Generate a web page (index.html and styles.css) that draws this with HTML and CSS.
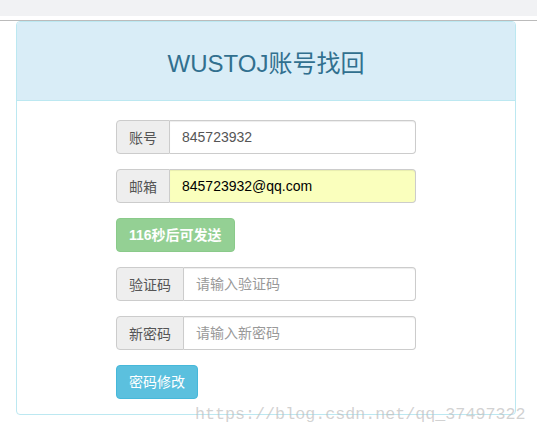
FILE: index.html
```html
<!DOCTYPE html>
<html lang="zh-CN">
<head>
    <meta charset="UTF-8">
    <meta name="viewport" content="width=device-width, initial-scale=1.0">
    <title>WUSTOJ账号找回</title>
    <link rel="stylesheet" href="styles.css">
</head>
<body>
    <div class="topbar"></div>
    <div class="panel">
        <div class="panel-heading">
            <h3 class="panel-title">WUSTOJ账号找回</h3>
        </div>
        <div class="panel-body">
            <form class="recover-form">
                <div class="input-group">
                    <span class="addon">账号</span>
                    <input type="text" class="field" value="845723932">
                </div>
                <div class="input-group">
                    <span class="addon">邮箱</span>
                    <input type="text" class="field autofill" value="845723932@qq.com">
                </div>
                <div class="form-row">
                    <button type="button" class="btn btn-success" disabled>116秒后可发送</button>
                </div>
                <div class="input-group">
                    <span class="addon">验证码</span>
                    <input type="text" class="field" placeholder="请输入验证码">
                </div>
                <div class="input-group">
                    <span class="addon">新密码</span>
                    <input type="password" class="field" placeholder="请输入新密码">
                </div>
                <div class="form-row last">
                    <button type="button" class="btn btn-info">密码修改</button>
                </div>
            </form>
        </div>
    </div>
    <div class="watermark">https://blog.csdn.net/qq_37497322</div>
</body>
</html>
```

FILE: styles.css
```css
body {
    margin: 0;
    font-family: "Liberation Sans", Arial, "Noto Sans CJK SC", sans-serif;
    font-size: 14px;
    color: #333;
    background: #fff;
    position: relative;
    height: 438px;
    overflow: hidden;
}
.topbar {
    height: 16px;
    background: #f1f2f4;
    border-bottom: 4px solid #fff;
    box-shadow: 0 1px 0 #bbb;
    margin-bottom: 1px;
}
.panel {
    width: 500px;
    margin-left: 16px;
    box-sizing: border-box;
    border: 1px solid #bce8f1;
    border-radius: 4px;
}
.panel-heading {
    height: 79px;
    box-sizing: border-box;
    padding: 29px 15px 0;
    background: #d9edf7;
    border-bottom: 1px solid #bce8f1;
    border-radius: 3px 3px 0 0;
}
.panel-title {
    margin: 0;
    text-align: center;
    font-size: 24px;
    font-weight: normal;
    line-height: 1.1;
    color: #31708f;
}
.panel-body {
    padding: 19px 15px 15px;
}
.recover-form {
    width: 300px;
    margin: 0 auto;
}
.input-group {
    display: flex;
    height: 34px;
    margin-bottom: 15px;
}
.addon {
    display: flex;
    align-items: center;
    padding: 0 12px;
    background: #eee;
    color: #555;
    border: 1px solid #ccc;
    border-radius: 4px 0 0 4px;
    white-space: nowrap;
}
.field {
    flex: 1;
    min-width: 0;
    padding: 6px 12px;
    font-family: inherit;
    font-size: 14px;
    color: #555;
    background: #fff;
    border: 1px solid #ccc;
    border-left: none;
    border-radius: 0 4px 4px 0;
    box-shadow: inset 0 1px 1px rgba(0, 0, 0, 0.075);
    outline: none;
}
.field::placeholder {
    color: #999;
}
.field.autofill {
    background: #faffbd;
    color: #000;
}
.form-row {
    margin-bottom: 15px;
}
.form-row.last {
    margin-bottom: 0;
}
.btn {
    display: inline-block;
    padding: 6px 12px;
    font-family: inherit;
    font-size: 14px;
    line-height: 20px;
    color: #fff;
    border: 1px solid transparent;
    border-radius: 4px;
    cursor: pointer;
}
.btn-success {
    background: #5cb85c;
    border-color: #4cae4c;
    font-weight: bold;
}
.btn-success:disabled {
    opacity: 0.65;
    cursor: not-allowed;
}
.btn-info {
    background: #5bc0de;
    border-color: #46b8da;
}
.watermark {
    position: absolute;
    left: 195px;
    top: 405px;
    font-family: "Liberation Mono", "Courier New", monospace;
    font-size: 16.7px;
    color: rgba(190, 190, 190, 0.7);
    white-space: nowrap;
    pointer-events: none;
}
```
